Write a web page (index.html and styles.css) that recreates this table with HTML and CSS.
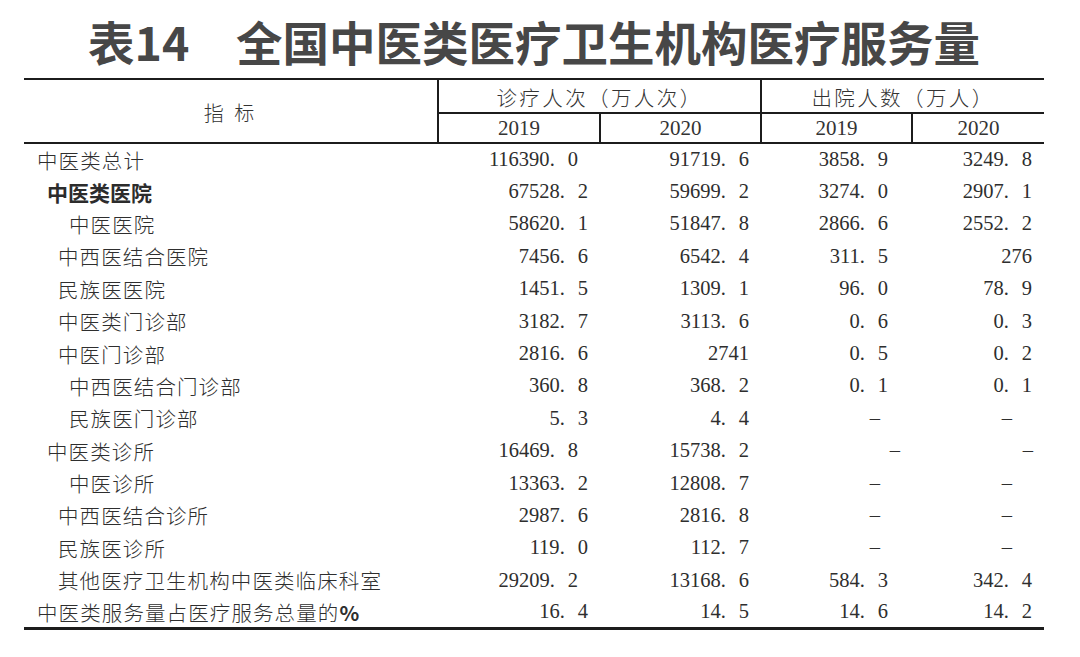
FILE: index.html
```html
<!DOCTYPE html>
<html lang="zh-CN">
<head>
<meta charset="utf-8">
<title>表14 全国中医类医疗卫生机构医疗服务量</title>
<link rel="stylesheet" href="styles.css">
</head>
<body>
<div class="page">
  <h1 class="title">表14　全国中医类医疗卫生机构医疗服务量</h1>
  <table class="tbl">
    <colgroup>
      <col class="c-name"><col class="c-a"><col class="c-b"><col class="c-c"><col class="c-d">
    </colgroup>
    <thead>
      <tr class="h1">
        <th rowspan="2" class="hname">指 标</th>
        <th colspan="2" class="grp sep">诊疗人次（万人次）</th>
        <th colspan="2" class="grp sep">出院人数（万人）</th>
      </tr>
      <tr class="h2">
        <th class="yr sep">2019</th>
        <th class="yr sep">2020</th>
        <th class="yr sep">2019</th>
        <th class="yr sep">2020</th>
      </tr>
    </thead>
    <tbody>
      <tr><td class="lbl l0">中医类总计</td><td class="n a far">116390<span class="dp">.</span>0</td><td class="n b">91719<span class="dp">.</span>6</td><td class="n c">3858<span class="dp">.</span>9</td><td class="n d">3249<span class="dp">.</span>8</td></tr>
      <tr><td class="lbl l1 bold">中医类医院</td><td class="n a">67528<span class="dp">.</span>2</td><td class="n b">59699<span class="dp">.</span>2</td><td class="n c">3274<span class="dp">.</span>0</td><td class="n d">2907<span class="dp">.</span>1</td></tr>
      <tr><td class="lbl l3">中医医院</td><td class="n a">58620<span class="dp">.</span>1</td><td class="n b">51847<span class="dp">.</span>8</td><td class="n c">2866<span class="dp">.</span>6</td><td class="n d">2552<span class="dp">.</span>2</td></tr>
      <tr><td class="lbl l2">中西医结合医院</td><td class="n a">7456<span class="dp">.</span>6</td><td class="n b">6542<span class="dp">.</span>4</td><td class="n c">311<span class="dp">.</span>5</td><td class="n d">276</td></tr>
      <tr><td class="lbl l2">民族医医院</td><td class="n a">1451<span class="dp">.</span>5</td><td class="n b">1309<span class="dp">.</span>1</td><td class="n c">96<span class="dp">.</span>0</td><td class="n d">78<span class="dp">.</span>9</td></tr>
      <tr><td class="lbl l2">中医类门诊部</td><td class="n a">3182<span class="dp">.</span>7</td><td class="n b">3113<span class="dp">.</span>6</td><td class="n c">0<span class="dp">.</span>6</td><td class="n d">0<span class="dp">.</span>3</td></tr>
      <tr><td class="lbl l2">中医门诊部</td><td class="n a">2816<span class="dp">.</span>6</td><td class="n b">2741</td><td class="n c">0<span class="dp">.</span>5</td><td class="n d">0<span class="dp">.</span>2</td></tr>
      <tr><td class="lbl l3">中西医结合门诊部</td><td class="n a">360<span class="dp">.</span>8</td><td class="n b">368<span class="dp">.</span>2</td><td class="n c">0<span class="dp">.</span>1</td><td class="n d">0<span class="dp">.</span>1</td></tr>
      <tr><td class="lbl l3">民族医门诊部</td><td class="n a">5<span class="dp">.</span>3</td><td class="n b">4<span class="dp">.</span>4</td><td class="n c dash">–</td><td class="n d dash">–</td></tr>
      <tr><td class="lbl l1">中医类诊所</td><td class="n a far">16469<span class="dp">.</span>8</td><td class="n b">15738<span class="dp">.</span>2</td><td class="n c dash wide">–</td><td class="n d dash wide">–</td></tr>
      <tr><td class="lbl l3">中医诊所</td><td class="n a">13363<span class="dp">.</span>2</td><td class="n b">12808<span class="dp">.</span>7</td><td class="n c dash">–</td><td class="n d dash">–</td></tr>
      <tr><td class="lbl l2">中西医结合诊所</td><td class="n a">2987<span class="dp">.</span>6</td><td class="n b">2816<span class="dp">.</span>8</td><td class="n c dash">–</td><td class="n d dash">–</td></tr>
      <tr><td class="lbl l2">民族医诊所</td><td class="n a">119<span class="dp">.</span>0</td><td class="n b">112<span class="dp">.</span>7</td><td class="n c dash">–</td><td class="n d dash">–</td></tr>
      <tr><td class="lbl l2">其他医疗卫生机构中医类临床科室</td><td class="n a far">29209<span class="dp">.</span>2</td><td class="n b">13168<span class="dp">.</span>6</td><td class="n c">584<span class="dp">.</span>3</td><td class="n d">342<span class="dp">.</span>4</td></tr>
      <tr><td class="lbl l0">中医类服务量占医疗服务总量的<span class="pct">%</span></td><td class="n a">16<span class="dp">.</span>4</td><td class="n b">14<span class="dp">.</span>5</td><td class="n c">14<span class="dp">.</span>6</td><td class="n d">14<span class="dp">.</span>2</td></tr>
    </tbody>
  </table>
</div>
</body>
</html>
```

FILE: styles.css
```css
html, body {
  margin: 0;
  padding: 0;
  background: #ffffff;
}

.page {
  width: 1020px;
  margin-left: 24px;
  padding-top: 17px;
  color: #383838;
  font-family: "Noto Sans CJK SC", "Noto Sans", sans-serif;
}

.title {
  margin: 0 0 14px 0;
  font-size: 46.5px;
  line-height: 47px;
  font-weight: 700;
  color: #474747;
  text-align: center;
  letter-spacing: 0;
}

.tbl {
  width: 1020px;
  table-layout: fixed;
  border-collapse: collapse;
  border-top: 2px solid #1c1c1c;
  border-bottom: 3px solid #1c1c1c;
}

.c-name { width: 414px; }
.c-a { width: 162px; }
.c-b { width: 161px; }
.c-c { width: 151px; }
.c-d { width: 132px; }

thead {
  border-bottom: 2px solid #1c1c1c;
}

th {
  padding: 0;
  font-weight: 300;
  color: #333333;
}

.h1 { height: 30px; }
.h2 { height: 30px; }

.hname {
  font-size: 20px;
  letter-spacing: 3px;
  padding-top: 2px;
}

.sep {
  border-left: 2px solid #1c1c1c;
}

.grp {
  font-size: 20.5px;
  letter-spacing: 2.4px;
  border-bottom: 2px solid #1c1c1c;
  padding-top: 2px;
}

.yr {
  font-family: "Liberation Serif", serif;
  font-size: 21px;
  font-weight: 400;
  padding-top: 1px;
}

tbody tr {
  height: 32.4px;
}

td {
  padding: 0;
  white-space: nowrap;
}

.lbl {
  font-size: 20.5px;
  font-weight: 300;
  letter-spacing: 1.1px;
  color: #2e2e2e;
}

.lbl.bold {
  font-weight: 700;
  letter-spacing: 0;
  color: #2c2c2c;
  font-size: 21px;
}

.pct {
  font-weight: 700;
  letter-spacing: 0;
}

.l0 { padding-left: 13px; }
.l1 { padding-left: 23px; }
.l2 { padding-left: 34px; }
.l3 { padding-left: 45px; }

.n {
  font-family: "Liberation Serif", serif;
  font-size: 20.5px;
  color: #2e2e2e;
  text-align: right;
}

.dp {
  letter-spacing: 13px;
}

.a { padding-right: 12px; }
.a.far { padding-right: 22px; }
.b { padding-right: 12px; }
.c { padding-right: 24px; }
.d { padding-right: 12px; }

.c.dash { padding-right: 32px; }
.d.dash { padding-right: 32px; }
.c.dash.wide { padding-right: 12px; }
.d.dash.wide { padding-right: 11px; }
```
